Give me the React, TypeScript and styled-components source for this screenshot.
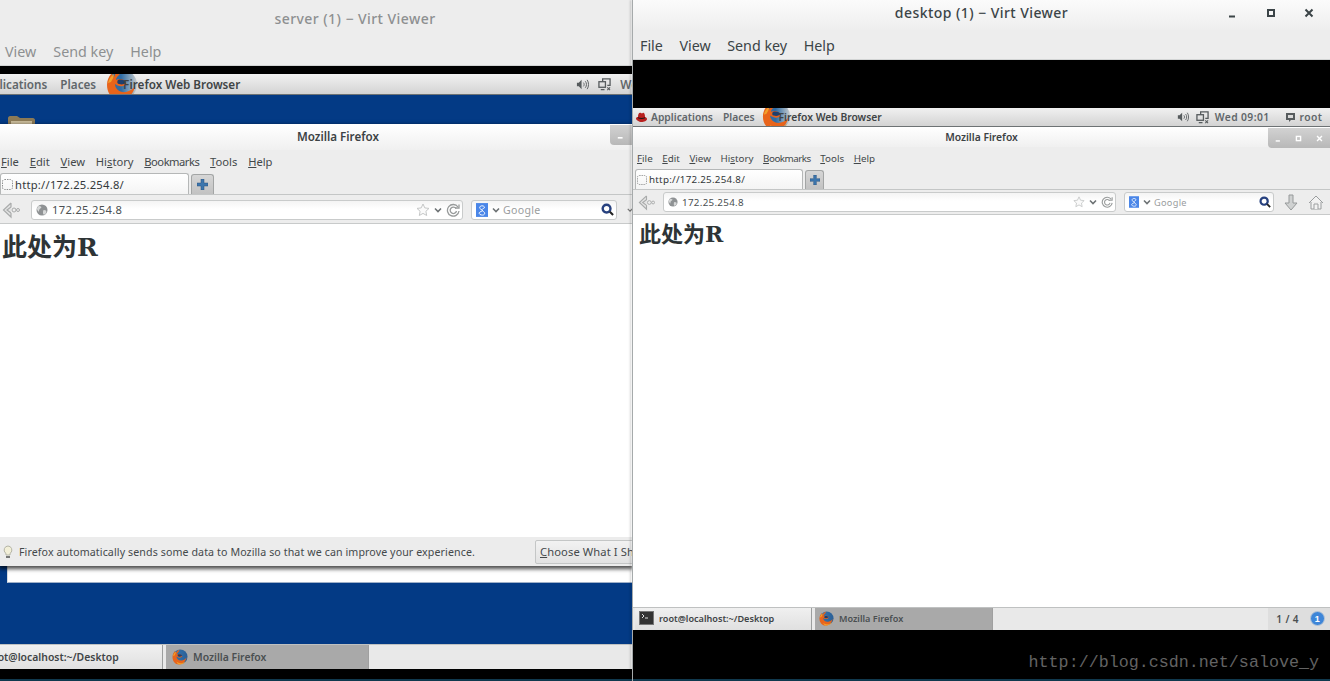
import React from "react";
import styled, { createGlobalStyle } from "styled-components";

const Global = createGlobalStyle`
  html, body { margin: 0; padding: 0; background: #000; }
  body { font-family: "Noto Sans", "Open Sans", sans-serif; }
  #root { width: 1330px; height: 681px; overflow: hidden; }
`;

type M = {
  vvTitleH: number; vvMenuH: number; vvFont: number; vvGap: number; vvPad: number; vvMenuDrop: number; vvColor: string; vvTitleSize: number; vvTitleShift: number;
  blackTop: number; panelH: number; panelFont: number;
  ffTitleH: number; ffTitleFont: number; ffTitleShift: number; menuH: number; menuFont: number; menuGap: number; menuPad: number; menuDrop: number;
  tabsH: number; tabW: number; tabFont: number; tabLead: number; newW: number;
  navH: number; navPad: number; backW: number; urlLead: number; urlW: number; urlH: number; urlFont: number; searchW: number; navDrop: number;
  h1: number; pagePad: number; pagePadTop: number; pageH: number;
  barH: number; barFont: number; btnW: number; btn2W: number; barPad: number; barLift: number;
};

const big: M = {
  vvTitleH: 44, vvMenuH: 22, vvFont: 14.3, vvGap: 17, vvPad: 5, vvMenuDrop: -6, vvColor: "#8d9091", vvTitleSize: 14, vvTitleShift: 39,
  blackTop: 8, panelH: 21, panelFont: 11.7,
  ffTitleH: 26, ffTitleFont: 11.6, ffTitleShift: 22, menuH: 22, menuFont: 11.2, menuGap: 10.8, menuPad: 1, menuDrop: 0,
  tabsH: 23, tabW: 189, tabFont: 11.2, tabLead: 2, newW: 23,
  navH: 29, navPad: 2, backW: 18, urlLead: 11, urlW: 432, urlH: 20, urlFont: 11.2, searchW: 146, navDrop: 1,
  h1: 25, pagePad: 2, pagePadTop: 9, pageH: 313,
  barH: 25, barFont: 10.4, btnW: 163, btn2W: 203, barPad: 6, barLift: 0,
};

const small: M = {
  vvTitleH: 30, vvMenuH: 30, vvFont: 14.3, vvGap: 16.5, vvPad: 7, vvMenuDrop: 2, vvColor: "#3b4447", vvTitleSize: 14, vvTitleShift: 0,
  blackTop: 48, panelH: 19, panelFont: 10.3,
  ffTitleH: 20, ffTitleFont: 10.3, ffTitleShift: 0, menuH: 21, menuFont: 9.8, menuGap: 9.6, menuPad: 4, menuDrop: 2,
  tabsH: 22, tabW: 168, tabFont: 9.8, tabLead: 2, newW: 19,
  navH: 25, navPad: 5, backW: 17, urlLead: 8, urlW: 453, urlH: 20, urlFont: 9.8, searchW: 150, navDrop: 0,
  h1: 22, pagePad: 6, pagePadTop: 6, pageH: 392,
  barH: 23, barFont: 9.1, btnW: 177, btn2W: 178, barPad: 4, barLift: 2,
};

const Screen = styled.div`
  display: flex;
  width: 1330px;
  height: 681px;
  overflow: hidden;
  background: #000;
`;

const Viewer = styled.section<{ $w: number }>`
  flex: none;
  width: ${(p) => p.$w}px;
  height: 681px;
  display: flex;
  flex-direction: column;
  overflow: hidden;
  background: #000;
`;

const Divider = styled.div`
  flex: none;
  position: relative;
  width: 1px;
  height: 681px;
  background: #a6aaab;
  box-shadow: -2px 0 2px rgba(0, 0, 0, 0.22);
`;

const VTitle = styled.header<{ $m: M }>`
  flex: none;
  position: relative;
  height: ${(p) => p.$m.vvTitleH}px;
  display: flex;
  align-items: ${(p) => (p.$m.vvTitleH > 35 ? "flex-end" : "center")};
  justify-content: center;
  padding-left: ${(p) => p.$m.vvTitleShift * 2}px;
  padding-bottom: ${(p) => (p.$m.vvTitleH > 35 ? 16 : 6)}px;
  box-sizing: border-box;
  background: ${(p) => (p.$m.vvTitleH > 35 ? "#ededed" : "linear-gradient(#fbfbfb, #eeeeee)")};
  color: ${(p) => p.$m.vvColor};
  font-size: ${(p) => p.$m.vvTitleSize}px;
  font-weight: 500;
  letter-spacing: 0.44px;
`;

const VControls = styled.div`
  position: absolute;
  right: 16px;
  top: 6px;
  display: flex;
  gap: 28px;
  align-items: center;
  height: 13px;
`;

const VMenu = styled.nav<{ $m: M }>`
  flex: none;
  height: ${(p) => p.$m.vvMenuH}px;
  box-sizing: border-box;
  display: flex;
  align-items: center;
  gap: ${(p) => p.$m.vvGap}px;
  padding-left: ${(p) => p.$m.vvPad}px;
  ${(p) => (p.$m.vvMenuDrop < 0 ? `padding-bottom: ${-p.$m.vvMenuDrop}px;` : `padding-top: ${p.$m.vvMenuDrop}px;`)}
  background: #ededed;
  border-bottom: 1px solid #d2d4d4;
  color: ${(p) => p.$m.vvColor};
  font-size: ${(p) => p.$m.vvFont}px;
`;

const Black = styled.div<{ $h: number }>`
  flex: none;
  height: ${(p) => p.$h}px;
  background: #000;
`;

const Panel = styled.div<{ $m: M }>`
  flex: none;
  position: relative;
  overflow: hidden;
  height: ${(p) => p.$m.panelH}px;
  box-sizing: border-box;
  display: flex;
  align-items: center;
  background: linear-gradient(#f1f1f1, #d3d3d3);
  border-bottom: 1px solid #6d7274;
  color: #4c5153;
  font-size: ${(p) => p.$m.panelFont}px;
  font-weight: 600;
  white-space: nowrap;
`;

const PanelText = styled.span<{ $l: number; $dark?: boolean; $spaced?: boolean }>`
  flex: none;
  margin-left: ${(p) => p.$l}px;
  color: ${(p) => (p.$dark ? "#3f4446" : "#60666a")};
  letter-spacing: ${(p) => (p.$spaced ? "0.4px" : "0")};
  position: relative;
`;

const PanelIcon = styled.span<{ $l: number }>`
  flex: none;
  display: flex;
  margin-left: ${(p) => p.$l}px;
`;

const PanelLogo = styled.span<{ $x: number; $y: number }>`
  position: absolute;
  left: ${(p) => p.$x}px;
  top: ${(p) => p.$y}px;
  display: flex;
`;

const Desktop = styled.div`
  flex: none;
  height: 549px;
  background: #033a85;
  display: flex;
  flex-direction: column;
  overflow: hidden;
`;

const FolderRow = styled.div`
  flex: none;
  height: 29px;
  padding: 20px 0 0 8px;
  box-sizing: border-box;
  overflow: hidden;
`;

const BrowserWin = styled.div<{ $shadow?: boolean }>`
  flex: none;
  position: relative;
  display: flex;
  flex-direction: column;
  background: #ededed;
  ${(p) => (p.$shadow ? "box-shadow: 0 2px 4px 1px rgba(0,0,0,.7);" : "")}
`;

const BackWindowEdge = styled.div`
  flex: none;
  height: 16px;
  margin-left: 7px;
  background: #fff;
  border-left: 1px solid #d8dce2;
  border-bottom: 1px solid #9fb0c8;
`;

const FTitle = styled.div<{ $m: M }>`
  flex: none;
  position: relative;
  height: ${(p) => p.$m.ffTitleH}px;
  display: flex;
  align-items: center;
  justify-content: center;
  padding-left: ${(p) => p.$m.ffTitleShift * 2}px;
  padding-bottom: ${(p) => (p.$m.ffTitleH > 22 ? 2 : 0)}px;
  box-sizing: border-box;
  background: linear-gradient(#ffffff, #f0f0f0);
  color: #3c4244;
  font-size: ${(p) => p.$m.ffTitleFont}px;
  font-weight: 600;
`;

const FControls = styled.div<{ $w: number }>`
  position: absolute;
  right: 0;
  top: 1px;
  width: ${(p) => p.$w}px;
  height: 20px;
  display: flex;
  align-items: center;
  justify-content: space-around;
  background: linear-gradient(#d2d2d2, #b8b8b8);
  border-bottom-left-radius: 4px;
  color: #fff;
`;

const FMenu = styled.div<{ $m: M }>`
  flex: none;
  height: ${(p) => p.$m.menuH}px;
  box-sizing: border-box;
  display: flex;
  align-items: center;
  gap: ${(p) => p.$m.menuGap}px;
  padding-left: ${(p) => p.$m.menuPad}px;
  padding-top: ${(p) => p.$m.menuDrop}px;
  color: #43484a;
  font-size: ${(p) => p.$m.menuFont}px;
`;

const NarrowItem = styled.span`
  letter-spacing: -0.5px;
`;

const Tabs = styled.div<{ $m: M }>`
  flex: none;
  height: ${(p) => p.$m.tabsH}px;
  box-sizing: border-box;
  display: flex;
  align-items: flex-end;
  gap: 2px;
  padding-left: ${(p) => (p.$m.tabW > 180 ? 0 : 2)}px;
  border-bottom: 1px solid #c4c6c6;
`;

const Tab = styled.div<{ $m: M }>`
  flex: none;
  width: ${(p) => p.$m.tabW}px;
  height: ${(p) => p.$m.tabsH - 2}px;
  box-sizing: border-box;
  display: flex;
  align-items: center;
  gap: ${(p) => p.$m.tabLead}px;
  padding-left: 1px;
  background: linear-gradient(#ffffff, #f4f4f4);
  border: 1px solid #b5b7b7;
  border-bottom: none;
  border-radius: 3px 3px 0 0;
  color: #33383a;
  font-size: ${(p) => p.$m.tabFont}px;
  letter-spacing: 0.25px;
`;

const NewTab = styled.div<{ $m: M }>`
  flex: none;
  width: ${(p) => p.$m.newW}px;
  height: ${(p) => p.$m.tabsH - 3}px;
  box-sizing: border-box;
  display: flex;
  align-items: center;
  justify-content: center;
  background: linear-gradient(#d6d6d6, #c2c2c2);
  border: 1px solid #a3a5a5;
  border-bottom: none;
  border-radius: 3px 3px 0 0;
`;

const NavBar = styled.div<{ $m: M }>`
  flex: none;
  height: ${(p) => p.$m.navH}px;
  box-sizing: border-box;
  display: flex;
  align-items: center;
  padding-left: ${(p) => p.$m.navPad}px;
  padding-top: ${(p) => p.$m.navDrop}px;
  border-bottom: 1px solid #c8caca;
`;

const BackSlot = styled.span<{ $m: M }>`
  flex: none;
  display: flex;
  width: ${(p) => p.$m.backW}px;
`;

const Field = styled.div<{ $w: number; $h: number; $l: number }>`
  flex: none;
  width: ${(p) => p.$w}px;
  height: ${(p) => p.$h}px;
  margin-left: ${(p) => p.$l}px;
  box-sizing: border-box;
  display: flex;
  align-items: center;
  gap: 4px;
  padding: 0 2px 0 4px;
  background: linear-gradient(#f4f4f4, #ffffff 45%);
  border: 1px solid #c9cbcb;
  border-radius: 3px;
`;

const FieldText = styled.span<{ $font: number; $muted?: boolean }>`
  flex: 1;
  margin-left: ${(p) => (p.$muted ? -1 : 0)}px;
  color: ${(p) => (p.$muted ? "#9a9d9e" : "#4a4f51")};
  font-size: ${(p) => p.$font}px;
  letter-spacing: 0.3px;
`;

const ToolIcon = styled.span<{ $l: number }>`
  flex: none;
  display: flex;
  margin-left: ${(p) => p.$l}px;
`;

const Page = styled.main<{ $m: M }>`
  flex: none;
  height: ${(p) => p.$m.pageH}px;
  box-sizing: border-box;
  padding: ${(p) => p.$m.pagePadTop}px 0 0 ${(p) => p.$m.pagePad}px;
  background: #fff;
`;

const Heading = styled.h1<{ $m: M }>`
  margin: 0;
  color: #2e3436;
  font-family: "DejaVu Serif", "Noto Sans CJK SC", serif;
  font-size: ${(p) => p.$m.h1}px;
  line-height: 1.2;
  font-weight: 700;
`;

const Notice = styled.div`
  flex: none;
  height: 29px;
  box-sizing: border-box;
  display: flex;
  align-items: center;
  padding-left: 2px;
  background: #ececec;
  color: #44494b;
  font-size: 10.65px;
  letter-spacing: 0.1px;
  white-space: nowrap;
`;

const NoticeIcon = styled.span`
  flex: none;
  display: flex;
`;

const NoticeText = styled.span`
  flex: none;
  width: 516px;
  margin-left: 5px;
`;

const NoticeButton = styled.span`
  flex: none;
  height: 24px;
  width: 120px;
  box-sizing: border-box;
  display: flex;
  align-items: center;
  padding-left: 4px;
  background: linear-gradient(#f2f2f2, #e2e2e2);
  border: 1px solid #c4c6c6;
  border-radius: 2px;
  font-size: 11.2px;
`;

const TaskBar = styled.div<{ $m: M }>`
  flex: none;
  height: ${(p) => p.$m.barH}px;
  box-sizing: border-box;
  display: flex;
  align-items: stretch;
  background: #e9e9e9;
  border-top: 1px solid #bfc1c1;
  color: #3f4446;
  font-size: ${(p) => p.$m.barFont}px;
  font-weight: 600;
  white-space: nowrap;
`;

const TaskButton = styled.div<{ $m: M; $w: number; $l: number; $active?: boolean }>`
  flex: none;
  width: ${(p) => p.$w}px;
  margin-left: ${(p) => p.$l}px;
  box-sizing: border-box;
  display: flex;
  align-items: center;
  gap: 5px;
  padding-left: ${(p) => p.$m.barPad}px;
  padding-bottom: ${(p) => p.$m.barLift}px;
  background: ${(p) => (p.$active ? "#a9a9a9" : "linear-gradient(#f0f0f0, #e0e0e0)")};
  border-right: 1px solid ${(p) => (p.$active ? "#a0a0a0" : "#9c9e9e")};
  color: ${(p) => (p.$active ? "#4a4f51" : "#3f4446")};
`;

const CutText = styled.span<{ $l: number }>`
  margin-left: ${(p) => p.$l}px;
`;

const Pager = styled.div`
  flex: none;
  margin-left: auto;
  display: flex;
  align-items: center;
  gap: 11px;
  padding: 0 5px 1px 8px;
  background: #dedede;
  color: #4a4f51;
  font-size: 10px;
  letter-spacing: 0.4px;
`;

const Bottom = styled.div`
  flex: none;
  height: 2px;
  background: #10394e;
`;

const BlackFoot = styled.div`
  flex: none;
  height: 49px;
  background: #000;
  display: flex;
  justify-content: flex-end;
  align-items: flex-end;
  padding: 0 11px 5px 0;
  box-sizing: border-box;
`;

const Watermark = styled.span`
  color: #636363;
  font-family: "Liberation Mono", monospace;
  font-size: 16.7px;
  line-height: 22px;
`;

/* ---------- drawings ---------- */
const FirefoxLogo = ({ s, fade }: { s: number; fade?: boolean }) => (
  <svg width={s} height={s} viewBox="0 0 32 32">
    <defs>
      <linearGradient id={fade ? "gf" : "gs"} x1="0" x2="1" y1="0" y2="0">
        <stop offset="0.45" stopColor="#2f6da6" />
        <stop offset="1" stopColor={fade ? "#c9cccc" : "#2b5f96"} />
      </linearGradient>
    </defs>
    <circle cx="16.5" cy="15.5" r="14.5" fill={`url(#${fade ? "gf" : "gs"})`} />
    <path d="M17 1C13 2 15 5 12 7c-1 1-2 2-2 4 3-2 8-1 10 2 1 2 0 3-3 4-4 1-6-1-8-2 0 5 5 9 11 8 4-1 7-3 9-6-1 7-7 14-15 14C6 31 1 24 1 16 1 11 3 7 6 4c0 2 1 4 2 4 1-4 4-6 9-7z" fill="#e8641b" />
    <path d="M9 25c3 3 8 4 12 3 3-1 5-2 7-4-3 5-8 7-13 7-3 0-5-2-6-6zM2 14c1-4 3-7 6-9 0 3-2 6-3 8z" fill="#f2a02a" />
    <path d="M12 11c3-1 7 0 8 2 0 2-4 3-7 2-2 0-2-3-1-4z" fill="#1f3f6e" />
  </svg>
);

const Folder = () => (
  <svg width="27" height="22" viewBox="0 0 27 22">
    <path d="M0 3c0-1 1-2 2-2h7l3 2h13c1 0 2 1 2 2v16H0z" fill="#8c7a56" />
    <path d="M3 6h21v3H3z" fill="#c9bb9a" />
    <path d="M0 9h27v12H0z" fill="#a28f68" />
  </svg>
);

const Volume = ({ s }: { s: number }) => (
  <svg width={s} height={s} viewBox="0 0 14 14" fill="none" stroke="#565b5d">
    <path d="M1 5h2l3-3v10L3 9H1z" fill="#565b5d" stroke="none" />
    <path d="M8 5c1 1 1 3 0 4M10 3.500c1.700 2 1.700 5 0 7M12 2c2 3 2 7 0 10" strokeWidth="1" />
  </svg>
);

const Network = ({ s }: { s: number }) => (
  <svg width={s} height={s} viewBox="0 0 14 14" fill="none" stroke="#565b5d" strokeWidth="1.4">
    <rect x="1" y="4" width="7" height="6" />
    <path d="M5 4V1h8v7h-3M3 12.500h4" />
    <path d="M10 10l3 3M13 10l-3 3" strokeWidth="1.1" />
  </svg>
);

const Chat = () => (
  <svg width="11" height="11" viewBox="0 0 11 11">
    <path d="M1 1h9v7H6l-2 2V8H1z" fill="#565b5d" />
    <rect x="3" y="3" width="5" height="3" fill="#d9d9d9" />
  </svg>
);

const RedHat = () => (
  <svg width="11" height="10" viewBox="0 0 11 10">
    <path d="M2 5c0-3 1-5 3-4l1 .4C8-.3 9 2 9 5c1 .3 2 1 2 2 0 2-3 3-5.500 3C3 10 0 8 0 6.500 0 5.500 1 5 2 5z" fill="#b8201f" />
    <path d="M2 5.300c2 1 5 1 7 0v1c-2 1-5 1-7 0z" fill="#1a1a1a" />
  </svg>
);

const DashedFav = ({ s }: { s: number }) => (
  <svg width={s} height={s} viewBox="0 0 11 11" fill="none">
    <rect x=".5" y=".5" width="10" height="10" rx="2" stroke="#8e9090" strokeDasharray="1.500 1" />
  </svg>
);

const Plus = ({ s }: { s: number }) => (
  <svg width={s} height={s} viewBox="0 0 11 11">
    <path d="M4 0h3v4h4v3H7v4H4V7H0V4h4z" fill="#3d76ad" stroke="#28527e" strokeWidth=".5" />
  </svg>
);

const BackArrow = ({ s }: { s: number }) => (
  <svg width={s} height={s} viewBox="0 0 18 18" fill="none" stroke="#a9abab">
    <path d="M9 2L1.500 9 9 16v-4M9 2v4l-4 3 4 3" strokeWidth="1.2" fill="#e4e4e4" />
    <circle cx="12" cy="9" r="2" strokeWidth="1" />
    <circle cx="16" cy="9" r="1.500" strokeWidth="1" />
  </svg>
);

const Globe = ({ s }: { s: number }) => (
  <svg width={s} height={s} viewBox="0 0 12 12">
    <circle cx="6" cy="6" r="5.500" fill="#8f9294" />
    <path d="M3 2c2 0 3 1 2 2S3 5 3 7 1 6 1 5s1-3 2-3zM8 6c2 0 3 1 2 3S7 11 7 9s0-3 1-3z" fill="#d6d8d8" />
  </svg>
);

const Star = ({ s }: { s: number }) => (
  <svg width={s} height={s} viewBox="0 0 14 14">
    <path d="M7 1l1.800 3.900 4.200.5-3.100 2.900.8 4.200L7 10.400l-3.700 2.100.8-4.200L1 5.400l4.200-.5z" fill="#fafafa" stroke="#c5c7c7" />
  </svg>
);

const Chevron = ({ s, c = "#6d7274" }: { s: number; c?: string }) => (
  <svg width={s} height={s} viewBox="0 0 8 8" fill="none">
    <path d="M1 2.500L4 5.500 7 2.500" stroke={c} strokeWidth="1.600" />
  </svg>
);

const Reload = ({ s }: { s: number }) => (
  <svg width={s} height={s} viewBox="0 0 14 14" fill="none" stroke="#989b9b" strokeWidth="1.300">
    <path d="M12 4a5.800 5.800 0 1 0 1 4" />
    <path d="M10 5.500A3.200 3.200 0 1 0 10.500 8" />
    <path d="M9 5h4V1.500" />
  </svg>
);

const GoogleTile = ({ s }: { s: number }) => (
  <svg width={s} height={s + 2} viewBox="0 0 13 15">
    <rect width="13" height="15" fill="#4a86e8" />
    <path d="M9 4c-1-1.500-4.500-1.500-5 .5S6.500 7 7 8s-3 1-3.500 2.500S5 13 7 13s3-1.500 2-3-3-1.500-2.500-3S10 6 9 4z" fill="none" stroke="#fff" strokeWidth="1" />
  </svg>
);

const Magnifier = ({ s }: { s: number }) => (
  <svg width={s} height={s} viewBox="0 0 14 14" fill="none">
    <circle cx="6" cy="6" r="4.200" stroke="#27417f" strokeWidth="2.600" />
    <path d="M9.500 9.500L13 13" stroke="#222" strokeWidth="2.200" />
  </svg>
);

const Download = () => (
  <svg width="14" height="17" viewBox="0 0 14 17">
    <path d="M5 1h4v8h4l-6 7-6-7h4z" fill="#cfd1d1" stroke="#96999a" />
  </svg>
);

const Home = () => (
  <svg width="16" height="15" viewBox="0 0 16 15" fill="#f2f2f2" stroke="#9a9d9e">
    <path d="M1 8l7-7 7 7M3 7v7h10V7" />
    <path d="M6 14V9h4v5" />
  </svg>
);

const Bulb = () => (
  <svg width="12" height="14" viewBox="0 0 12 14">
    <path d="M6 1a4 4 0 0 0-2.500 7c.5.500.5 1 .5 2h4c0-1 0-1.500.5-2A4 4 0 0 0 6 1z" fill="#f2efd8" stroke="#b5b5a6" />
    <path d="M4 11h4v2H4z" fill="#777" />
  </svg>
);

const Terminal = () => (
  <svg width="15" height="14" viewBox="0 0 15 14">
    <rect x=".5" y=".5" width="14" height="13" fill="#333" stroke="#777" />
    <path d="M3 3l2 2-2 2M6 7h3" stroke="#ddd" fill="none" />
  </svg>
);

const Badge = () => (
  <svg width="15" height="15" viewBox="0 0 15 15">
    <circle cx="7.500" cy="7.500" r="7" fill="#3f86d8" stroke="#b8c6d6" />
    <text x="7.500" y="11" textAnchor="middle" fontSize="9" fontWeight="700" fill="#fff" fontFamily="Liberation Sans, sans-serif">1</text>
  </svg>
);

const WinGlyph = ({ kind, c, s }: { kind: "min" | "max" | "close"; c: string; s: number }) => (
  <svg width={s} height={s} viewBox="0 0 10 10" fill="none" stroke={c} strokeWidth="2">
    {kind === "min" && <path d="M1 8.500h6" />}
    {kind === "max" && <rect x="2" y="2" width="6" height="6" />}
    {kind === "close" && <path d="M1.500 1.500l7 7M8.500 1.500l-7 7" />}
  </svg>
);

/* ---------- assemblies ---------- */
const Menu = ({ m }: { m: M }) => (
  <FMenu $m={m}>
    <span><u>F</u>ile</span>
    <span><u>E</u>dit</span>
    <span><u>V</u>iew</span>
    <span>Hi<u>s</u>tory</span>
    <NarrowItem><u>B</u>ookmarks</NarrowItem>
    <span><u>T</u>ools</span>
    <span><u>H</u>elp</span>
  </FMenu>
);

const BrowserChrome = ({ m, extra, wide }: { m: M; extra?: React.ReactNode; wide: boolean }) => (
  <>
    <Menu m={m} />
    <Tabs $m={m}>
      <Tab $m={m}>
        <DashedFav s={wide ? 11 : 10} />
        <span>http://172.25.254.8/</span>
      </Tab>
      <NewTab $m={m}><Plus s={wide ? 11 : 10} /></NewTab>
    </Tabs>
    <NavBar $m={m}>
      <BackSlot $m={m}><BackArrow s={m.backW} /></BackSlot>
      <Field $w={m.urlW} $h={m.urlH} $l={m.urlLead}>
        <Globe s={wide ? 12 : 10} />
        <FieldText $font={m.urlFont}>172.25.254.8</FieldText>
        <Star s={wide ? 14 : 12} />
        <Chevron s={8} />
        <Reload s={wide ? 14 : 12} />
      </Field>
      <Field $w={m.searchW} $h={m.urlH} $l={8}>
        <GoogleTile s={wide ? 12 : 10} />
        <Chevron s={8} />
        <FieldText $font={m.urlFont - 0.6} $muted>Google</FieldText>
        <Magnifier s={wide ? 13 : 12} />
      </Field>
      {extra}
    </NavBar>
  </>
);

export default function App() {
  return (
    <Screen>
      <Global />
      <Viewer $w={632}>
        <VTitle $m={big}>server (1) − Virt Viewer</VTitle>
        <VMenu $m={big}>
          <span>View</span>
          <span>Send key</span>
          <span>Help</span>
        </VMenu>
        <Black $h={big.blackTop} />
        <Panel $m={big}>
          <PanelText $l={-23}>Applications</PanelText>
          <PanelText $l={13}>Places</PanelText>
          <PanelLogo $x={106} $y={-5}><FirefoxLogo s={32} fade /></PanelLogo>
          <PanelText $l={27} $dark>Firefox Web Browser</PanelText>
          <PanelIcon $l={336}><Volume s={13} /></PanelIcon>
          <PanelIcon $l={9}><Network s={13} /></PanelIcon>
          <PanelText $l={9}>Wed 09:01</PanelText>
        </Panel>
        <Desktop>
          <FolderRow><Folder /></FolderRow>
          <BrowserWin $shadow>
            <FTitle $m={big}>
              Mozilla Firefox
              <FControls $w={22}><WinGlyph kind="min" c="#fff" s={8} /></FControls>
            </FTitle>
            <BrowserChrome m={big} wide extra={<ToolIcon $l={10}><Chevron s={6} c="#777" /></ToolIcon>} />
            <Page $m={big}><Heading $m={big}>此处为R</Heading></Page>
            <Notice>
              <NoticeIcon><Bulb /></NoticeIcon>
              <NoticeText>Firefox automatically sends some data to Mozilla so that we can improve your experience.</NoticeText>
              <NoticeButton><span><u>C</u>hoose What I Share</span></NoticeButton>
            </Notice>
          </BrowserWin>
          <BackWindowEdge />
        </Desktop>
        <TaskBar $m={big}>
          <TaskButton $m={big} $w={big.btnW} $l={0}>
            <CutText $l={-19}>root@localhost:~/Desktop</CutText>
          </TaskButton>
          <TaskButton $m={big} $w={big.btn2W} $l={3} $active>
            <FirefoxLogo s={16} />
            <span>Mozilla Firefox</span>
          </TaskButton>
        </TaskBar>
        <Black $h={10} />
        <Bottom />
      </Viewer>
      <Divider />
      <Viewer $w={697}>
        <VTitle $m={small}>
          desktop (1) − Virt Viewer
          <VControls>
            <WinGlyph kind="min" c="#3b4447" s={10} />
            <WinGlyph kind="max" c="#3b4447" s={10} />
            <WinGlyph kind="close" c="#3b4447" s={10} />
          </VControls>
        </VTitle>
        <VMenu $m={small}>
          <span>File</span>
          <span>View</span>
          <span>Send key</span>
          <span>Help</span>
        </VMenu>
        <Black $h={small.blackTop} />
        <Panel $m={small}>
          <PanelIcon $l={3}><RedHat /></PanelIcon>
          <PanelText $l={4}>Applications</PanelText>
          <PanelText $l={10}>Places</PanelText>
          <PanelLogo $x={129} $y={-6}><FirefoxLogo s={29} fade /></PanelLogo>
          <PanelText $l={24} $dark>Firefox Web Browser</PanelText>
          <PanelIcon $l={295}><Volume s={12} /></PanelIcon>
          <PanelIcon $l={7}><Network s={13} /></PanelIcon>
          <PanelText $l={6} $spaced>Wed 09:01</PanelText>
          <PanelIcon $l={16}><Chat /></PanelIcon>
          <PanelText $l={3} $spaced>root</PanelText>
        </Panel>
        <BrowserWin>
          <FTitle $m={small}>
            Mozilla Firefox
            <FControls $w={62}>
              <WinGlyph kind="min" c="#fff" s={7} />
              <WinGlyph kind="max" c="#fff" s={7} />
              <WinGlyph kind="close" c="#fff" s={7} />
            </FControls>
          </FTitle>
          <BrowserChrome
            m={small}
            wide={false}
            extra={
              <>
                <ToolIcon $l={10}><Download /></ToolIcon>
                <ToolIcon $l={10}><Home /></ToolIcon>
              </>
            }
          />
          <Page $m={small}><Heading $m={small}>此处为R</Heading></Page>
        </BrowserWin>
        <TaskBar $m={small}>
          <TaskButton $m={small} $w={small.btnW} $l={2}>
            <Terminal />
            <span>root@localhost:~/Desktop</span>
          </TaskButton>
          <TaskButton $m={small} $w={small.btn2W} $l={3} $active>
            <FirefoxLogo s={15} />
            <span>Mozilla Firefox</span>
          </TaskButton>
          <Pager>
            <span>1 / 4</span>
            <Badge />
          </Pager>
        </TaskBar>
        <BlackFoot><Watermark>http://blog.csdn.net/salove_y</Watermark></BlackFoot>
        <Bottom />
      </Viewer>
    </Screen>
  );
}
